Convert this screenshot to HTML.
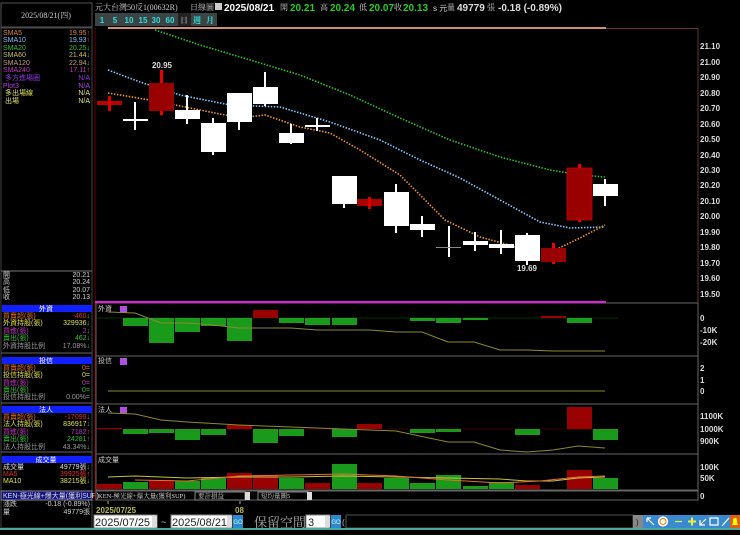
<!DOCTYPE html>
<html><head><meta charset="utf-8"><style>
body{margin:0;background:#000;width:740px;height:530px;overflow:hidden;font-family:"Liberation Sans","Noto Sans CJK TC",sans-serif}
svg text{font-family:"Liberation Sans","Noto Sans CJK TC",sans-serif}
.s{font-family:"Liberation Serif","Noto Serif CJK SC",serif}
</style></head><body>
<svg width="740" height="530" viewBox="0 0 740 530" xmlns="http://www.w3.org/2000/svg">
<rect width="740" height="530" fill="#000"/>
<rect x="1" y="3" width="91" height="24" fill="#000" stroke="#555"/>
<text x="46" y="18" fill="#ccc" font-size="8" text-anchor="middle" class="s">2025/08/21(四)</text>
<rect x="1" y="28" width="91" height="500" fill="none" stroke="#444"/>
<g font-size="7" class="s">
<text x="3" y="35" fill="#d8883a">SMA5</text><text x="90" y="35" fill="#d8883a" text-anchor="end">19.95<tspan fill="#f33">↑</tspan></text>
<text x="3" y="42" fill="#7fbfff">SMA10</text><text x="90" y="42" fill="#7fbfff" text-anchor="end">19.93<tspan fill="#f33">↑</tspan></text>
<text x="3" y="50" fill="#30c030">SMA20</text><text x="90" y="50" fill="#30c030" text-anchor="end">20.25<tspan fill="#3c3">↓</tspan></text>
<text x="3" y="57" fill="#c8c060">SMA60</text><text x="90" y="57" fill="#c8c060" text-anchor="end">21.44<tspan fill="#3c3">↓</tspan></text>
<text x="3" y="65" fill="#c0a080">SMA120</text><text x="90" y="65" fill="#c0a080" text-anchor="end">22.94<tspan fill="#3c3">↓</tspan></text>
<text x="3" y="72" fill="#c030c0">SMA240</text><text x="90" y="72" fill="#c030c0" text-anchor="end">17.11<tspan fill="#f33">↑</tspan></text>
<text x="5" y="80" fill="#9030e0">多方進場圈</text><text x="90" y="80" fill="#9030e0" text-anchor="end">N/A</text>
<text x="3" y="88" fill="#b040e0">Plot3</text><text x="90" y="88" fill="#b040e0" text-anchor="end">N/A</text>
<text x="5" y="95" fill="#e0e060">多出場線</text><text x="90" y="95" fill="#e0e060" text-anchor="end">N/A</text>
<text x="5" y="103" fill="#e0e060">出場</text><text x="90" y="103" fill="#e0e060" text-anchor="end">N/A</text>
</g>
<line x1="1" y1="271" x2="92" y2="271" fill="none" stroke="#777"/>
<g font-size="7" class="s" fill="#ccc">
<text x="3" y="277">開</text><text x="90" y="277" text-anchor="end">20.21</text>
<text x="3" y="284">高</text><text x="90" y="284" text-anchor="end">20.24</text>
<text x="3" y="292">低</text><text x="90" y="292" text-anchor="end">20.07</text>
<text x="3" y="299">收</text><text x="90" y="299" text-anchor="end">20.13</text>
</g>
<g font-size="7" class="s">
<rect x="2" y="305" width="90" height="7" fill="#1020ff"/><text x="46" y="311" fill="#fff" text-anchor="middle">外資</text>
<text x="3" y="318" fill="#e07020">買賣超(張)</text><text x="90" y="318" fill="#e03030" text-anchor="end">-460<tspan fill="#3c3">↓</tspan></text>
<text x="3" y="325" fill="#e0e040">外資持股(張)</text><text x="90" y="325" fill="#e0e040" text-anchor="end">329936<tspan fill="#3c3">↓</tspan></text>
<text x="3" y="333" fill="#c030c0">買進(張)</text><text x="90" y="333" fill="#c030c0" text-anchor="end">2<tspan fill="#3c3">↓</tspan></text>
<text x="3" y="340" fill="#30c030">賣出(張)</text><text x="90" y="340" fill="#30c030" text-anchor="end">462<tspan fill="#3c3">↓</tspan></text>
<text x="3" y="348" fill="#999">外資持股比例</text><text x="90" y="348" fill="#999" text-anchor="end">17.08%<tspan fill="#3c3">↓</tspan></text>
<line x1="1" y1="353" x2="92" y2="353" stroke="#666"/>
<rect x="2" y="357" width="90" height="7" fill="#1020ff"/><text x="46" y="363" fill="#fff" text-anchor="middle">投信</text>
<text x="3" y="370" fill="#e07020">買賣超(張)</text><text x="90" y="370" fill="#e07020" text-anchor="end">0=</text>
<text x="3" y="377" fill="#e0e040">投信持股(張)</text><text x="90" y="377" fill="#e0e040" text-anchor="end">0=</text>
<text x="3" y="385" fill="#c030c0">買進(張)</text><text x="90" y="385" fill="#c030c0" text-anchor="end">0=</text>
<text x="3" y="392" fill="#30c030">賣出(張)</text><text x="90" y="392" fill="#30c030" text-anchor="end">0=</text>
<text x="3" y="399" fill="#999">投信持股比例</text><text x="90" y="399" fill="#999" text-anchor="end">0.00%=</text>
<line x1="1" y1="403" x2="92" y2="403" stroke="#666"/>
<rect x="2" y="406" width="90" height="7" fill="#1020ff"/><text x="46" y="412" fill="#fff" text-anchor="middle">法人</text>
<text x="3" y="419" fill="#e07020">買賣超(張)</text><text x="90" y="419" fill="#e03030" text-anchor="end">-17099<tspan fill="#3c3">↓</tspan></text>
<text x="3" y="426" fill="#e0e040">法人持股(張)</text><text x="90" y="426" fill="#e0e040" text-anchor="end">836917<tspan fill="#3c3">↓</tspan></text>
<text x="3" y="434" fill="#c030c0">買進(張)</text><text x="90" y="434" fill="#c030c0" text-anchor="end">7182<tspan fill="#f33">↑</tspan></text>
<text x="3" y="441" fill="#30c030">賣出(張)</text><text x="90" y="441" fill="#30c030" text-anchor="end">24281<tspan fill="#f33">↑</tspan></text>
<text x="3" y="449" fill="#999">法人持股比例</text><text x="90" y="449" fill="#999" text-anchor="end">43.34%<tspan fill="#3c3">↓</tspan></text>
<line x1="1" y1="452" x2="92" y2="452" stroke="#666"/>
<rect x="2" y="456" width="90" height="7" fill="#1020ff"/><text x="46" y="462" fill="#fff" text-anchor="middle">成交量</text>
<text x="3" y="469" fill="#ddd">成交量</text><text x="90" y="469" fill="#ddd" text-anchor="end">49779張<tspan fill="#3c3">↓</tspan></text>
<text x="3" y="476" fill="#e03030">MA5</text><text x="90" y="476" fill="#e03030" text-anchor="end">39925張<tspan fill="#f33">↑</tspan></text>
<text x="3" y="483" fill="#e0e040">MA10</text><text x="90" y="483" fill="#e0e040" text-anchor="end">38215張<tspan fill="#3c3">↓</tspan></text>
<rect x="1" y="491" width="91" height="9" fill="#101080" stroke="#888"/><text x="3" y="498" fill="#ddd">KEN-極光線+爆大量(獲利SUP)</text>
<text x="3" y="506" fill="#ccc">漲跌</text><text x="90" y="506" fill="#ccc" text-anchor="end">-0.18 (-0.89%)</text>
<text x="3" y="514" fill="#ccc">量</text><text x="90" y="514" fill="#ccc" text-anchor="end">49779張</text>
</g>
<text x="95" y="10" font-size="8" fill="#ccc" class="s">元大台灣50反1(00632R)</text>
<text x="190" y="10" font-size="8" fill="#ccc" class="s">日線圖</text>
<rect x="215" y="3" width="7" height="7" fill="#ccc"/>
<text x="224" y="11" font-size="10" font-weight="bold" fill="#fff">2025/08/21</text>
<text x="280" y="10" font-size="8" fill="#ccc" class="s">開</text><text x="290" y="11" font-size="10" font-weight="bold" fill="#2c2">20.21</text>
<text x="320" y="10" font-size="8" fill="#ccc" class="s">高</text><text x="330" y="11" font-size="10" font-weight="bold" fill="#2c2">20.24</text>
<text x="359" y="10" font-size="8" fill="#ccc" class="s">低</text><text x="369" y="11" font-size="10" font-weight="bold" fill="#2c2">20.07</text>
<text x="394" y="10" font-size="8" fill="#ccc" class="s">收</text><text x="403" y="11" font-size="10" font-weight="bold" fill="#2c2">20.13</text>
<text x="433" y="11" font-size="8" fill="#ccc">s 元</text>
<text x="447" y="10" font-size="8" fill="#ccc" class="s">量</text><text x="457" y="11" font-size="10" font-weight="bold" fill="#ddd">49779</text>
<text x="487" y="10" font-size="8" fill="#ccc" class="s">張</text><text x="498" y="11" font-size="10" font-weight="bold" fill="#ddd">-0.18 (-0.89%)</text>
<g font-size="8" font-weight="bold" text-anchor="middle">
<rect x="95" y="13" width="122" height="13" fill="#3a4444"/>
<text x="102" y="23" fill="#3dd">1</text><text x="115" y="23" fill="#3dd">5</text><text x="129" y="23" fill="#3dd">10</text><text x="143" y="23" fill="#3dd">15</text><text x="156" y="23" fill="#3dd">30</text><text x="170" y="23" fill="#3dd">60</text>
<rect x="178" y="13" width="13" height="13" fill="#222"/><text x="184" y="23" fill="#888" class="s">日</text>
<text x="197" y="23" fill="#3dd" class="s">週</text><text x="210" y="23" fill="#3dd" class="s">月</text>
</g>
<line x1="95" y1="28" x2="95" y2="500" stroke="#600"/>
<line x1="108" y1="28" x2="606" y2="28" stroke="#d09070" stroke-width="2"/>
<line x1="606" y1="28.5" x2="698" y2="28.5" stroke="#633"/>
<line x1="698" y1="28" x2="698" y2="303" stroke="#633"/>
<g stroke="#666" fill="none">
<rect x="96" y="303" width="602" height="53"/><rect x="96" y="356" width="602" height="48"/>
<rect x="96" y="404" width="602" height="50"/><rect x="96" y="454" width="602" height="36"/>
<rect x="96" y="491" width="602" height="9"/>
</g>
<line x1="95" y1="302" x2="606" y2="302" stroke="#e020e0" stroke-width="2"/>
<g font-size="8" font-weight="bold" fill="#ddd">
<text x="700" y="49">21.10</text><text x="700" y="65">21.00</text><text x="700" y="80">20.90</text><text x="700" y="96">20.80</text><text x="700" y="111">20.70</text><text x="700" y="127">20.60</text><text x="700" y="142">20.50</text><text x="700" y="158">20.40</text><text x="700" y="173">20.30</text><text x="700" y="188">20.20</text><text x="700" y="204">20.10</text><text x="700" y="219">20.00</text><text x="700" y="235">19.90</text><text x="700" y="250">19.80</text><text x="700" y="266">19.70</text><text x="700" y="281">19.60</text><text x="700" y="297">19.50</text>
<text x="700" y="321">0</text><text x="700" y="333">-10K</text><text x="700" y="345">-20K</text>
<text x="700" y="371">2</text><text x="700" y="383">1</text><text x="700" y="394">0</text>
<text x="700" y="419">1100K</text><text x="700" y="432">1000K</text><text x="700" y="444">900K</text>
<text x="700" y="470">100K</text><text x="700" y="481">50K</text><text x="700" y="499">0</text>
</g>
<g fill="none" stroke-width="1.6" stroke-dasharray="1.5 1.5">
<polyline stroke="#30c030" points="155,30 200,45 250,60 300,75 350,95 400,118 450,140 500,157 550,170 580,175 605,177"/>
<polyline stroke="#80c8ff" points="108,70 140,82 180,95 230,105 280,107 330,122 380,140 420,160 460,178 500,200 540,222 570,228 605,227"/>
<polyline stroke="#f09030" points="108,93 150,100 200,110 240,118 265,115 300,127 330,133 360,150 400,175 445,220 480,237 520,248 555,250 580,238 605,225"/>
</g>
<g fill="#fff">
<rect x="97" y="101" width="25" height="4" fill="#b00"/><rect x="108" y="96" width="3" height="15" fill="#d00"/>
<rect x="134" y="102" width="2" height="28"/><rect x="123" y="119" width="25" height="2"/>
<rect x="160" y="70" width="3" height="45" fill="#e00"/><rect x="149" y="83" width="25" height="28" fill="#900"/>
<rect x="186" y="95" width="2" height="29"/><rect x="175" y="110" width="25" height="9"/>
<rect x="212" y="118" width="2" height="37"/><rect x="201" y="123" width="25" height="29"/>
<rect x="238" y="93" width="2" height="37"/><rect x="227" y="93" width="25" height="29"/>
<rect x="264" y="72" width="2" height="34"/><rect x="253" y="87" width="25" height="17"/>
<rect x="290" y="124" width="2" height="20"/><rect x="279" y="133" width="25" height="10"/>
<rect x="316" y="118" width="2" height="13"/><rect x="305" y="125" width="25" height="2"/>
<rect x="343" y="176" width="2" height="32"/><rect x="332" y="176" width="25" height="28"/>
<rect x="357" y="199" width="25" height="7" fill="#a00"/><rect x="368" y="197" width="3" height="12" fill="#d00"/>
<rect x="395" y="184" width="2" height="49"/><rect x="384" y="192" width="25" height="34"/>
<rect x="421" y="216" width="2" height="21"/><rect x="410" y="224" width="25" height="6"/>
<rect x="448" y="226" width="2" height="31"/><rect x="436" y="247" width="25" height="1" fill="#888"/>
<rect x="474" y="232" width="2" height="19"/><rect x="463" y="241" width="25" height="4"/>
<rect x="500" y="230" width="2" height="24"/><rect x="489" y="244" width="25" height="4"/>
<rect x="526" y="233" width="2" height="32"/><rect x="515" y="235" width="25" height="26"/>
<rect x="552" y="243" width="3" height="21" fill="#e00"/><rect x="541" y="248" width="25" height="14" fill="#900"/>
<rect x="578" y="164" width="3" height="58" fill="#e00"/><rect x="567" y="168" width="25" height="52" fill="#900" stroke="#c00" stroke-width="0.8"/>
<rect x="604" y="179" width="2" height="27"/><rect x="593" y="184" width="25" height="12"/>
</g>
<text x="162" y="68" font-size="8" font-weight="bold" fill="#ddd" text-anchor="middle">20.95</text>
<text x="527" y="271" font-size="8" font-weight="bold" fill="#ddd" text-anchor="middle">19.69</text>
<g font-size="7" fill="#ccc" class="s">
<text x="98" y="311">外資</text><text x="98" y="363">投信</text><text x="98" y="412">法人</text><text x="98" y="462">成交量</text>
</g>
<g fill="#b050e0"><rect x="120" y="306" width="7" height="7"/><rect x="120" y="358" width="7" height="7"/><rect x="120" y="407" width="7" height="7"/></g>
<line x1="97" y1="318" x2="618" y2="318" stroke="#030" stroke-width="1"/>
<g fill="#1a9a1a">
<rect x="123" y="318" width="25" height="8"/><rect x="149" y="318" width="25" height="25"/><rect x="175" y="318" width="25" height="14"/><rect x="201" y="318" width="25" height="8"/><rect x="227" y="318" width="25" height="23"/><rect x="279" y="318" width="25" height="5"/><rect x="305" y="318" width="25" height="7"/><rect x="332" y="318" width="25" height="7"/><rect x="410" y="318" width="25" height="3"/><rect x="436" y="318" width="25" height="5"/><rect x="463" y="318" width="25" height="2"/><rect x="567" y="318" width="25" height="5"/>
</g>
<rect x="253" y="310" width="25" height="8" fill="#900"/><rect x="541" y="316" width="25" height="2" fill="#900"/>
<polyline fill="none" stroke="#8a8a30" points="108,312 135,313 161,323 187,323 213,325 239,328 291,328 317,330 370,330 396,332 422,332 448,342 474,342 500,350 527,350 553,351 605,351"/>
<line x1="108" y1="391" x2="605" y2="391" stroke="#8a8a30"/>
<line x1="97" y1="429" x2="618" y2="429" stroke="#300"/>
<g fill="#1a9a1a">
<rect x="123" y="429" width="25" height="5"/><rect x="149" y="429" width="25" height="4"/><rect x="175" y="429" width="25" height="11"/><rect x="201" y="429" width="25" height="6"/><rect x="253" y="429" width="25" height="14"/><rect x="279" y="429" width="25" height="7"/><rect x="332" y="429" width="25" height="8"/><rect x="410" y="429" width="25" height="4"/><rect x="436" y="429" width="25" height="3"/><rect x="515" y="429" width="25" height="6"/><rect x="593" y="429" width="25" height="11"/>
</g>
<g fill="#900"><rect x="227" y="425" width="25" height="4"/><rect x="357" y="424" width="25" height="5"/><rect x="567" y="407" width="25" height="22"/><rect x="97" y="428" width="25" height="1"/></g>
<polyline fill="none" stroke="#8a8a30" points="108,413 135,414 161,420 187,422 239,425 291,427 343,429 396,431 448,442 474,442 500,450 527,452 553,450 578,446 605,448"/>
<g fill="#900"><rect x="97" y="484" width="25" height="5"/><rect x="149" y="480" width="25" height="9"/><rect x="227" y="473" width="25" height="16"/><rect x="253" y="475" width="25" height="14"/><rect x="305" y="483" width="25" height="6"/><rect x="357" y="483" width="25" height="6"/><rect x="410" y="485" width="25" height="4"/><rect x="515" y="485" width="25" height="4"/><rect x="567" y="470" width="25" height="19"/></g>
<g fill="#1a9a1a"><rect x="123" y="482" width="25" height="7"/><rect x="175" y="481" width="25" height="8"/><rect x="201" y="478" width="25" height="11"/><rect x="279" y="478" width="25" height="11"/><rect x="332" y="464" width="25" height="25"/><rect x="384" y="478" width="25" height="11"/><rect x="410" y="483" width="25" height="6"/><rect x="436" y="475" width="25" height="14"/><rect x="463" y="486" width="25" height="3"/><rect x="489" y="482" width="25" height="7"/><rect x="593" y="478" width="25" height="11"/></g>
<polyline fill="none" stroke="#c8c040" points="108,477 135,476 187,478 239,477 291,477 343,476 396,477 448,478 500,479 527,481 553,481 578,478 605,477"/>
<polyline fill="none" stroke="#e07030" points="135,480 187,481 239,476 291,475 343,474 396,476 448,480 500,483 540,481 578,477 605,476"/>
<text x="98" y="498" font-size="6.5" fill="#ddd" class="s">KEN-極光線+爆大量(獲利SUP)</text>
<rect x="195" y="492" width="50" height="8" fill="#000" stroke="#888"/><text x="198" y="498" font-size="6.5" fill="#ccc" class="s">要計損益</text><rect x="245" y="492" width="5" height="8" fill="#ddd"/>
<rect x="258" y="492" width="50" height="8" fill="#000" stroke="#888"/><text x="261" y="498" font-size="6.5" fill="#ccc" class="s">短均量圖5</text><rect x="307" y="492" width="5" height="8" fill="#ddd"/>
<line x1="108" y1="501" x2="108" y2="504" stroke="#bb4"/><line x1="240" y1="501" x2="240" y2="504" stroke="#bb4"/>
<text x="96" y="513" font-size="8" font-weight="bold" fill="#bb4">2025/07/25</text>
<text x="235" y="513" font-size="8" font-weight="bold" fill="#bb4">08</text>
<rect x="94" y="515" width="63" height="13" fill="#fff" stroke="#888"/><text x="95" y="526" font-size="11" fill="#222">2025/07/25</text><rect x="152" y="516" width="5" height="11" fill="#ddd"/>
<text x="161" y="525" font-size="9" fill="#ccc">~</text>
<rect x="171" y="515" width="61" height="13" fill="#fff" stroke="#888"/><text x="172" y="526" font-size="11" fill="#222">2025/08/21</text><rect x="227" y="516" width="5" height="11" fill="#ddd"/>
<rect x="233" y="515" width="10" height="13" fill="#2a8ad0"/><text x="238" y="524" font-size="6" fill="#cff" text-anchor="middle">GO</text>
<text x="254" y="527" font-size="13" fill="#aaa" class="s">保留空間</text>
<rect x="306" y="515" width="24" height="13" fill="#fff" stroke="#888"/><text x="308" y="526" font-size="11" fill="#222">3</text><rect x="325" y="516" width="5" height="11" fill="#ddd"/>
<rect x="331" y="515" width="10" height="13" fill="#2a8ad0"/><text x="336" y="524" font-size="6" fill="#cff" text-anchor="middle">GO</text>
<text x="342" y="525" font-size="8" fill="#ccc">(</text>
<rect x="346" y="515" width="287" height="13" fill="#000" stroke="#555"/>
<rect x="633" y="515" width="10" height="13" fill="#888"/><text x="636" y="525" font-size="8" fill="#222">)</text>
<rect x="643" y="515" width="97" height="13" fill="#3a8ad0"/>
<g stroke="#fff" stroke-width="1.2" fill="none"><path d="M647 518 L654 525 M647 518 h4 M647 518 v4"/><circle cx="663" cy="521.5" r="4.5" fill="#fff"/><path d="M675 521.5 h7" stroke="#ee4"/><path d="M688 521.5 h8 M692 517.5 v8" stroke="#ee4" stroke-width="2"/><path d="M700 525 l6 -6 M700 520 v5 h5"/><path d="M710 518 h8 v7 h-8z"/><path d="M722 526 l7 -8"/></g>
<circle cx="663" cy="521.5" r="3" fill="none" stroke="#e70"/>
<rect x="730" y="515" width="10" height="13" fill="#e06010"/><path d="M732 525 h6 l-1 -2 v-3 a2 2 0 0 0 -4 0 v3z" fill="#ff0"/>
<rect x="0" y="528" width="740" height="2" fill="#4aa8a0"/>
</svg>
</body></html>
